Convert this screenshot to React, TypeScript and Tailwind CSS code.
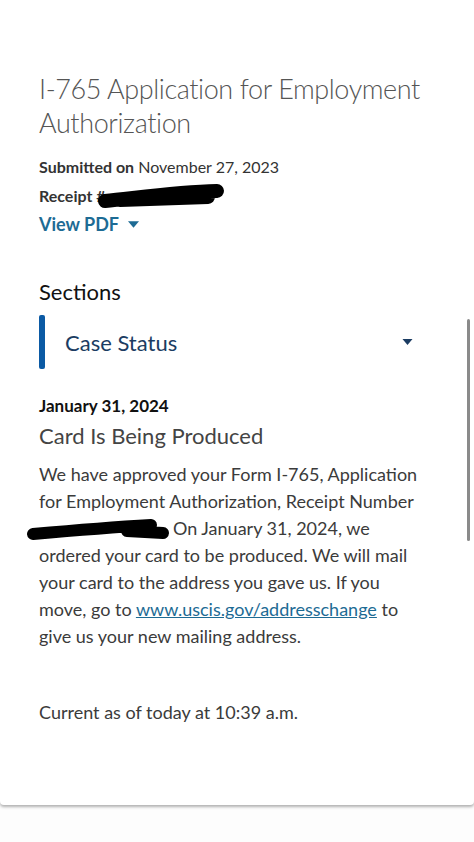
import React from 'react';

function Caret({ className }: { className?: string }) {
  return (
    <svg viewBox="0 0 10 6" className={className} fill="currentColor">
      <path d="M0 0h10L5 6z" />
    </svg>
  );
}

// marker scribble used to hide the receipt number
function Redaction({ d, width, height, stroke = 12, className }: { d: string; width: number; height: number; stroke?: number; className?: string }) {
  return (
    <svg width={width} height={height} viewBox={`0 0 ${width} ${height}`} className={className}>
      <path d={d} fill="none" stroke="#000" strokeWidth={stroke} strokeLinecap="round" strokeLinejoin="round" />
    </svg>
  );
}

export default function App() {
  return (
    <div className="relative min-h-[842px] w-[474px] bg-[#fdfdfd] font-['Lato',sans-serif] overflow-hidden">
      <div className="bg-white shadow-[0_2px_3px_rgba(0,0,0,0.3)] rounded-b-sm pt-[72px] pb-[79px] px-[39px]">
        <h1 className="text-[27px] leading-[34px] font-light tracking-[-0.4px] text-[#555]">
          I-765 Application for Employment Authorization
        </h1>

        <div className="mt-[12px] text-[16px] leading-[29px] text-[#333]">
          <p>
            <span className="font-bold">Submitted on</span> November 27, 2023
          </p>
          <p className="flex items-center">
            <span className="font-bold">Receipt #</span>
            <Redaction
              width={130}
              height={28}
              stroke={14}
              d="M9 19 C 40 16, 80 10, 121 9 M 24 18 L 112 15"
              className="-ml-[10px]"
            />
          </p>
          <button className="flex items-center gap-[9px] text-[18px] font-bold text-[#1d6b94]">
            View PDF
            <Caret className="w-[11px] h-[7px]" />
          </button>
        </div>

        <h2 className="mt-[38px] text-[22px] leading-[30px] text-[#111]">Sections</h2>

        <div className="mt-[8px] flex items-center h-[54px]">
          <div className="w-[6px] h-full rounded-[2px] bg-[#0b5aa4]" />
          <div className="flex-1 flex items-center justify-between pl-[20px] pr-[22px]">
            <span className="text-[22px] text-[#1b3c62]">Case Status</span>
            <Caret className="w-[11px] h-[6px] text-[#1b3c62]" />
          </div>
        </div>

        <p className="mt-[24px] text-[17px] font-bold text-[#111]">January 31, 2024</p>
        <p className="mt-[2px] text-[22px] leading-[30px] text-[#444]">Card Is Being Produced</p>

        <p className="mt-[10px] mr-[6px] text-[18px] leading-[27px] text-[#3b3b3b]">
          We have approved your Form I-765, Application for Employment Authorization, Receipt Number{' '}
          <Redaction
            width={144}
            height={22}
            d="M6 15 C 40 12, 90 8, 124 6 M 100 12 L 136 14"
            className="inline-block align-middle -ml-[12px] mr-[2px]"
          />
          On January 31, 2024, we ordered your card to be produced. We will mail your card to the address you gave us. If you move, go to{' '}
          <a className="text-[#1d6b94] underline">www.uscis.gov/addresschange</a> to give us your new mailing address.
        </p>

        <p className="mt-[49px] text-[18px] text-[#3b3b3b]">Current as of today at 10:39 a.m.</p>
      </div>

      <div className="absolute left-[467px] top-[319px] w-[3px] h-[222px] rounded-full bg-[#8a8a8a]" />
    </div>
  );
}
